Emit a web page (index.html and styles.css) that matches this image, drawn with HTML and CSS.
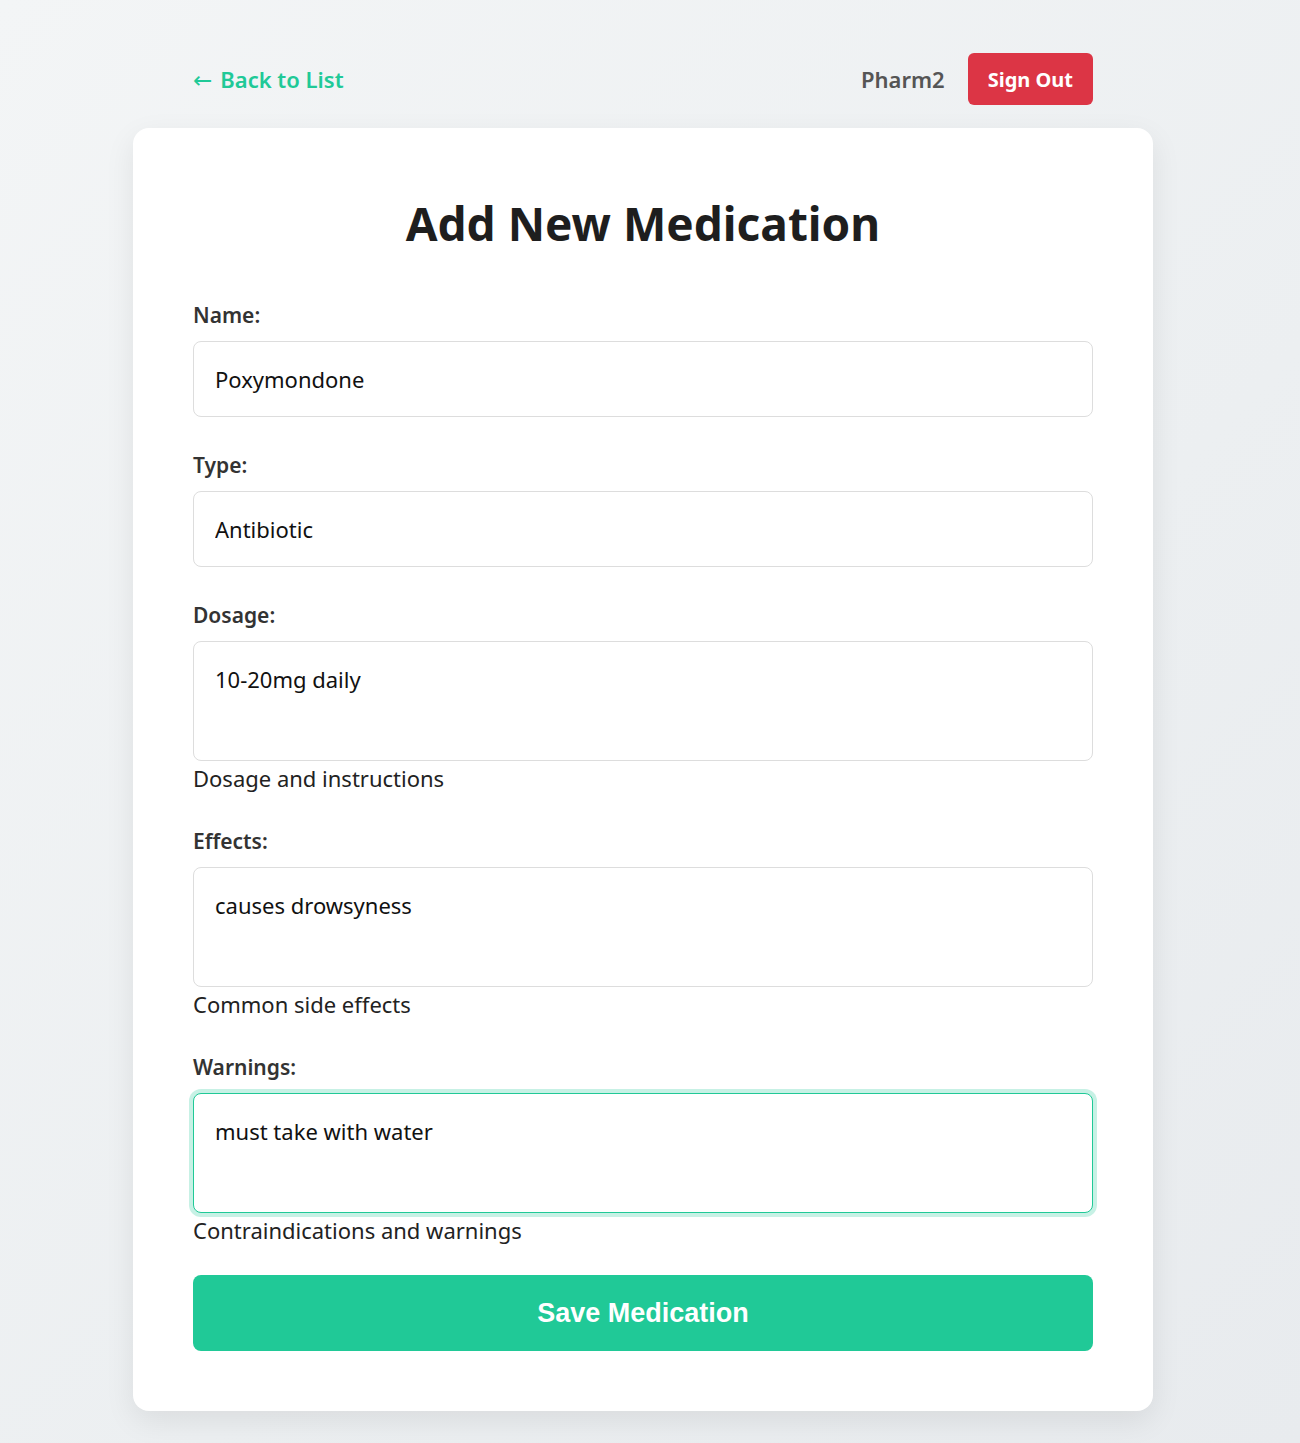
FILE: index.html
```html
<!DOCTYPE html>
<html lang="en">
<head>
<meta charset="utf-8">
<title>Add New Medication</title>
<link rel="stylesheet" href="styles.css">
</head>
<body>
<div class="page">
  <header class="topbar">
    <a class="back-link" href="#"><span class="back-arrow">←</span> Back to List</a>
    <div class="user-area">
      <span class="user-name">Pharm2</span>
      <button class="signout-btn" type="button">Sign Out</button>
    </div>
  </header>
  <main class="card">
    <h1 class="title">Add New Medication</h1>
    <form class="med-form">
      <div class="form-group">
        <label class="field-label" for="name">Name:</label>
        <input class="field-input" id="name" type="text" value="Poxymondone">
      </div>
      <div class="form-group">
        <label class="field-label" for="type">Type:</label>
        <input class="field-input" id="type" type="text" value="Antibiotic">
      </div>
      <div class="form-group has-help">
        <label class="field-label" for="dosage">Dosage:</label>
        <textarea class="field-input field-area" id="dosage">10-20mg daily</textarea>
        <div class="help-text">Dosage and instructions</div>
      </div>
      <div class="form-group has-help">
        <label class="field-label" for="effects">Effects:</label>
        <textarea class="field-input field-area" id="effects">causes drowsyness</textarea>
        <div class="help-text">Common side effects</div>
      </div>
      <div class="form-group has-help last">
        <label class="field-label" for="warnings">Warnings:</label>
        <textarea class="field-input field-area is-focused" id="warnings">must take with water</textarea>
        <div class="help-text">Contraindications and warnings</div>
      </div>
      <button class="save-btn" type="button">Save Medication</button>
    </form>
  </main>
</div>
</body>
</html>
```

FILE: styles.css
```css
* { box-sizing: border-box; }

html, body {
  margin: 0;
  padding: 0;
}

body {
  min-height: 100vh;
  background: linear-gradient(135deg, #f3f5f6 0%, #eceff1 60%, #e8ebee 100%);
  font-family: "Noto Sans", "Open Sans", sans-serif;
  color: #222;
  padding: 53px 14px 32px 0;
}

.page {
  width: 1020px;
  margin: 0 auto;
}

.topbar {
  display: flex;
  align-items: center;
  justify-content: space-between;
  margin: 0 60px 23px;
  height: 52px;
}

.back-link {
  color: #20c997;
  text-decoration: none;
  font-weight: 600;
  font-size: 22px;
  display: flex;
  align-items: center;
  gap: 8px;
}

.back-arrow {
  font-family: "DejaVu Sans", sans-serif;
  font-weight: 400;
  font-size: 23px;
  line-height: 1;
  margin-top: 3px;
}

.user-area {
  display: flex;
  align-items: center;
  gap: 23px;
}

.user-name {
  color: #555;
  font-size: 22px;
  font-weight: 600;
}

.signout-btn {
  height: 52px;
  padding: 0 20px;
  background: #dc3545;
  color: #fff;
  border: none;
  border-radius: 6px;
  font-family: "Noto Sans", "Open Sans", sans-serif;
  font-size: 20px;
  font-weight: 700;
}

.card {
  background: #fff;
  border-radius: 16px;
  padding: 60px;
  box-shadow: 0 10px 30px rgba(0, 0, 0, 0.08);
}

.title {
  margin: 6px 0 48px;
  text-align: center;
  font-size: 46px;
  line-height: 58px;
  font-weight: 700;
  color: #1e1e1e;
}

.med-form {
  display: flex;
  flex-direction: column;
}

.form-group {
  display: flex;
  flex-direction: column;
  margin-bottom: 33px;
}

.form-group.has-help {
  margin-bottom: 34px;
}

.form-group.last {
  margin-bottom: 31px;
}

.field-label {
  font-size: 21px;
  line-height: 30px;
  font-weight: 600;
  color: #333;
  margin-bottom: 11px;
}

.field-input {
  display: block;
  width: 100%;
  padding: 22px 21px;
  border: 1px solid #ddd;
  border-radius: 8px;
  font-family: "Noto Sans", "Open Sans", sans-serif;
  font-size: 22px;
  line-height: 30px;
  color: #111;
  background: #fff;
  outline: none;
}

.field-area {
  height: 120px;
  resize: none;
}

.field-input.is-focused {
  border-color: #20c997;
  box-shadow: 0 0 0 4px rgba(32, 201, 151, 0.25);
}

.help-text {
  margin-top: 3px;
  font-size: 22px;
  line-height: 28px;
  color: #222;
}

.save-btn {
  height: 76px;
  width: 100%;
  border: none;
  border-radius: 8px;
  background: #20c997;
  color: #fff;
  font-family: "Liberation Sans", Arial, sans-serif;
  font-size: 27px;
  font-weight: 700;
}
```
